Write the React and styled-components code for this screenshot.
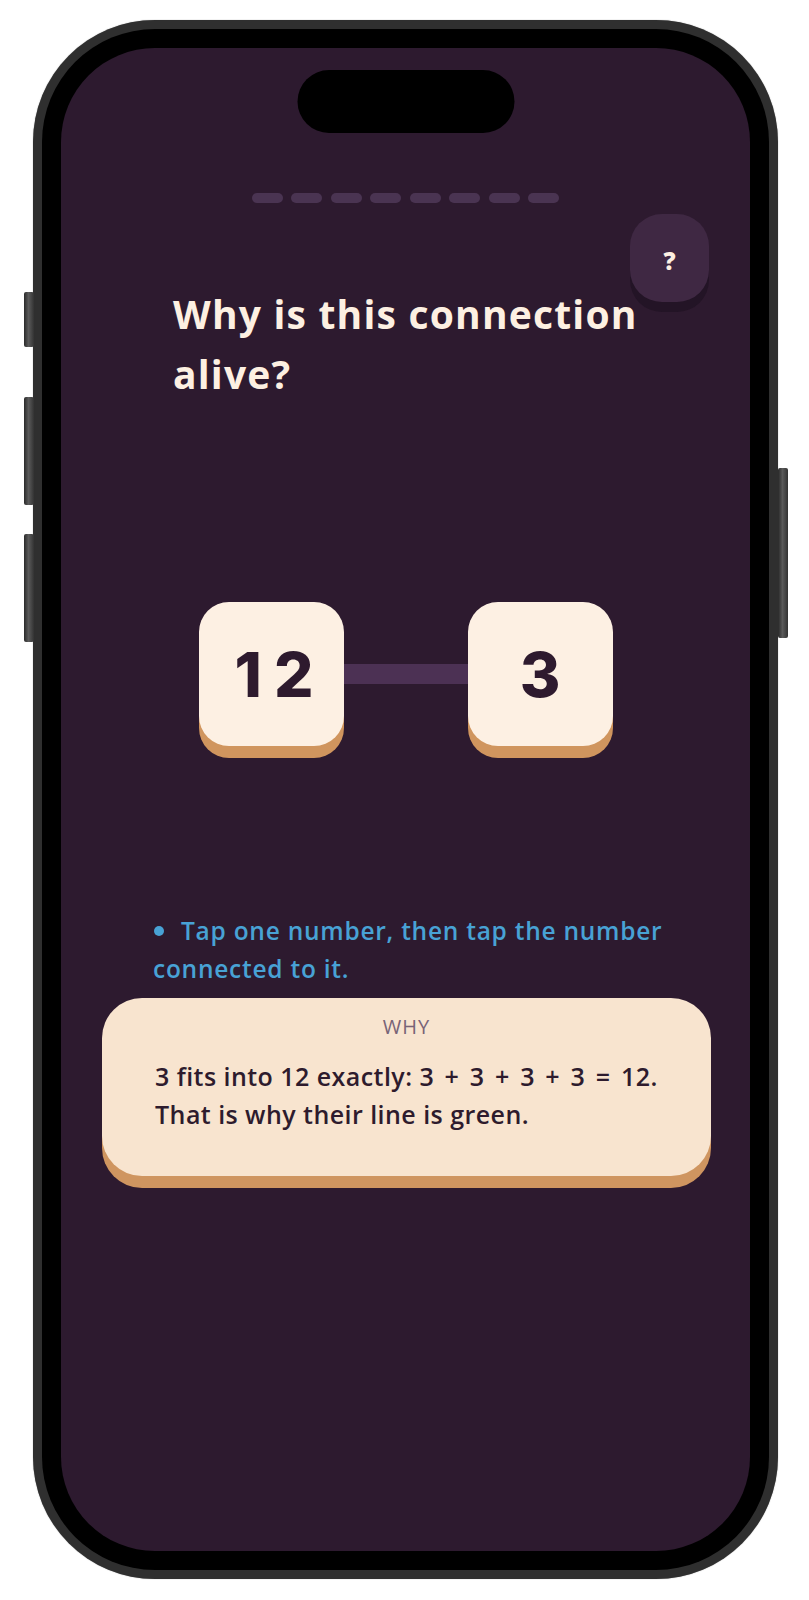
import React from "react";
import styled, { createGlobalStyle } from "styled-components";

const GlobalStyle = createGlobalStyle`
  html, body {
    margin: 0;
    padding: 0;
    background: #ffffff;
  }
  body {
    font-family: "Open Sans", "Lato", sans-serif;
  }
  * { box-sizing: border-box; }
`;

const Page = styled.div`
  width: 809px;
  height: 1600px;
  padding: 20px 0 0 33px;
  background: #ffffff;
`;

const Phone = styled.div`
  position: relative;
  width: 745px;
  height: 1559px;
  padding: 9px;
  border-radius: 122px;
  background: #2f2f2f;
  box-shadow: 0 0 1px rgba(0, 0, 0, 0.5);
`;

const Bezel = styled.div`
  width: 100%;
  height: 100%;
  padding: 19px;
  border-radius: 113px;
  background: #000000;
`;

const SideKey = styled.div`
  position: absolute;
  width: 10px;
  border-radius: 2px;
  background: linear-gradient(90deg, #2a2a2a 0%, #5a5a5a 45%, #333 100%);
  ${({ $side }) => ($side === "left" ? "left: -9px;" : "right: -10px;")}
  top: ${({ $top }) => $top}px;
  height: ${({ $h }) => $h}px;
`;

const Screen = styled.div`
  position: relative;
  width: 100%;
  height: 100%;
  border-radius: 94px;
  background: #2d1a2f;
  overflow: hidden;
  padding-top: 145px;
  display: flex;
  flex-direction: column;
`;

const Island = styled.div`
  position: absolute;
  top: 22px;
  left: 50%;
  transform: translateX(-50%);
  width: 217px;
  height: 63px;
  border-radius: 32px;
  background: #000000;
`;

const Progress = styled.div`
  display: flex;
  justify-content: center;
  gap: 8.5px;
`;

const Dash = styled.span`
  width: 31px;
  height: 10px;
  border-radius: 5px;
  background: #4a3452;
`;

const HelpButton = styled.button`
  position: absolute;
  top: 166px;
  right: 41px;
  width: 79px;
  height: 88px;
  border: none;
  border-radius: 32px;
  background: #3f2843;
  box-shadow: 0 10px 0 #231426;
  color: #fdf0e2;
  font-family: "Open Sans", sans-serif;
  font-weight: 800;
  font-size: 24px;
  line-height: 1;
  padding: 6px 0 0;
  display: flex;
  align-items: center;
  justify-content: center;
`;

const Title = styled.h1`
  margin: 81px 0 0 112px;
  width: 520px;
  font-family: "Open Sans", sans-serif;
  font-weight: 700;
  font-size: 39px;
  line-height: 60px;
  letter-spacing: 1.2px;
  color: #fdf0e2;
`;

const PairRow = styled.div`
  margin-top: 198px;
  display: flex;
  justify-content: center;
  align-items: center;
`;

const Tile = styled.div`
  width: 145px;
  height: 144px;
  border-radius: 30px;
  background: #fdf0e3;
  box-shadow: 0 12px 0 #d0955e;
  display: flex;
  align-items: center;
  justify-content: center;
  font-family: "Inter", "Lato", sans-serif;
  font-weight: 800;
  font-size: 62px;
  letter-spacing: ${({ $spread }) => ($spread ? "12px" : "0")};
  padding-left: ${({ $spread }) => ($spread ? "18px" : "0")};
  color: #2e1a2e;
`;

const Link = styled.div`
  width: 124px;
  height: 20px;
  background: #4c3154;
`;

const Hint = styled.p`
  margin: 166px 0 0 92px;
  width: 560px;
  font-family: "Open Sans", sans-serif;
  font-weight: 600;
  font-size: 24.5px;
  line-height: 38px;
  letter-spacing: 0.75px;
  color: #48a2d5;
`;

const Dot = styled.span`
  display: inline-block;
  width: 10px;
  height: 10px;
  border-radius: 50%;
  background: #48a2d5;
  margin: 0 17px 0 1px;
  vertical-align: 4px;
`;

const WhyCard = styled.section`
  margin: 10px 0 0 41px;
  width: 609px;
  height: 178px;
  border-radius: 40px;
  background: #f8e4cf;
  box-shadow: 0 12px 0 #cf9560;
  padding: 17px 20px 0 53px;
`;

const CardLabel = styled.div`
  text-align: center;
  margin-left: -33px;
  font-family: "Open Sans", sans-serif;
  font-weight: 500;
  font-size: 20px;
  line-height: 24px;
  letter-spacing: 1px;
  color: #786377;
`;

const CardBody = styled.p`
  margin: 18px 0 0;
  font-family: "Open Sans", sans-serif;
  font-weight: 600;
  font-size: 25px;
  line-height: 38px;
  letter-spacing: 0.45px;
  color: #2e1b2d;
`;

/* the sum reads with roomier gaps around its operators */
const Sum = styled.span`
  word-spacing: 3.5px;
`;

const keys = [
  { side: "left", top: 272, h: 55 },
  { side: "left", top: 377, h: 108 },
  { side: "left", top: 514, h: 108 },
  { side: "right", top: 448, h: 170 },
];

export default function App() {
  return (
    <Page>
      <GlobalStyle />
      <Phone>
        {keys.map((k, i) => (
          <SideKey key={i} $side={k.side} $top={k.top} $h={k.h} />
        ))}
        <Bezel>
          <Screen>
            <Island />
            <Progress>
              {Array.from({ length: 8 }).map((_, i) => (
                <Dash key={i} />
              ))}
            </Progress>
            <HelpButton aria-label="Help">?</HelpButton>
            <Title>Why is this connection alive?</Title>
            <PairRow>
              <Tile $spread>12</Tile>
              <Link />
              <Tile>3</Tile>
            </PairRow>
            <Hint>
              <Dot />
              Tap one number, then tap the number connected to it.
            </Hint>
            <WhyCard>
              <CardLabel>WHY</CardLabel>
              <CardBody>
                3 fits into 12 exactly: <Sum>3 + 3 + 3 + 3 = 12.</Sum>
                <br />
                That is why their line is green.
              </CardBody>
            </WhyCard>
          </Screen>
        </Bezel>
      </Phone>
    </Page>
  );
}
